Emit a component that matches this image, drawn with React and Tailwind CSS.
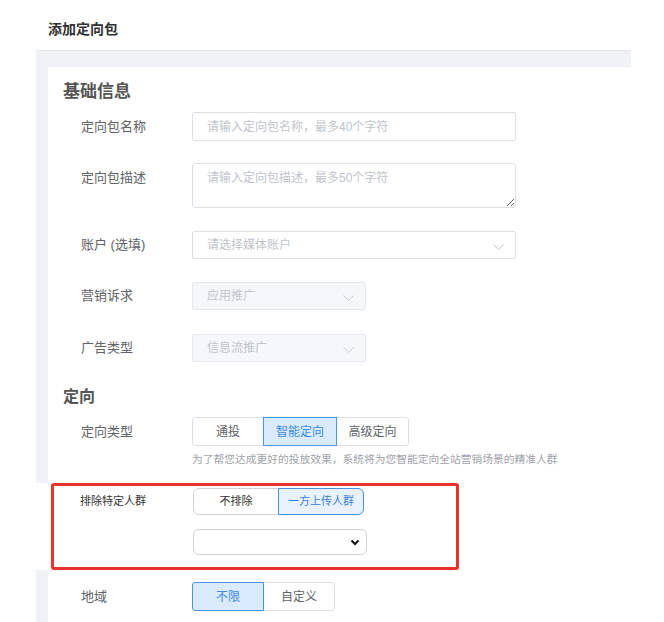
import React from 'react';

const font = { fontFamily: '"Liberation Sans", "Noto Sans CJK SC", sans-serif' };

function Chevron({ className = '' }) {
  return (
    <svg width="11" height="6" viewBox="0 0 11 6" className={className}>
      <path d="M0.5 0.5 L5.5 5.5 L10.5 0.5" fill="none" stroke="currentColor" strokeWidth="1" />
    </svg>
  );
}

function Row({ label, top = 'mt-[23px]', h = 'h-[29px] leading-[29px]', children }) {
  return (
    <div className={`flex items-start ${top} pl-[33px]`}>
      <div className={`w-[111px] shrink-0 ${h} text-[13px] text-[#606266]`}>{label}</div>
      {children}
    </div>
  );
}

function Segment({ items, active, widths }) {
  return (
    <div className="flex h-[29px]">
      {items.map((it, i) => {
        const on = i === active;
        const first = i === 0;
        const last = i === items.length - 1;
        return (
          <div
            key={it}
            className={
              'flex items-center justify-center text-[12px] border ' +
              (first ? 'rounded-l-[3px] ' : '-ml-px ') +
              (last ? 'rounded-r-[3px] ' : '') +
              (on
                ? 'relative z-10 bg-[#d9ebfd] border-[#4a94e6] text-[#3b8ae6]'
                : 'bg-white border-[#dcdfe6] text-[#606266]')
            }
            style={{ width: widths[i] }}
          >
            {it}
          </div>
        );
      })}
    </div>
  );
}

export default function App() {
  return (
    <div className="min-h-[622px] bg-white" style={font}>
      <div className="pt-[20px] pl-[48px] text-[14px] leading-[18px] font-bold text-[#303133]">添加定向包</div>

      <div className="mt-[12px] ml-[36px] w-[595px] bg-[#f0f2f5] border-t border-[#e6e8eb] pt-[16px] pl-[12px]">
        <div className="bg-white pb-[12px]">
          <div className="pt-[14px] pl-[15px] text-[17px] leading-[22px] font-bold text-[#555]">基础信息</div>

          <Row label="定向包名称" top="mt-[9px]">
            <input
              className="w-[324px] h-[29px] border border-[#dcdfe6] rounded-[2px] px-[14px] text-[12px] outline-none placeholder:text-[#c0c4cc]"
              placeholder="请输入定向包名称，最多40个字符"
            />
          </Row>

          <Row label="定向包描述" top="mt-[22px]">
            <textarea
              className="block w-[324px] h-[45px] border border-[#dcdfe6] rounded-[3px] px-[14px] py-[6px] text-[12px] leading-[16px] outline-none placeholder:text-[#c0c4cc]"
              placeholder="请输入定向包描述，最多50个字符"
            />
          </Row>

          <Row label="账户 (选填)" h="h-[28px] leading-[28px]">
            <div className="w-[324px] h-[28px] border border-[#dcdfe6] rounded-[2px] pl-[14px] pr-[11px] flex items-center justify-between text-[12px] text-[#c0c4cc]">
              <span>请选择媒体账户</span>
              <Chevron className="mt-[3px] text-[#c0c4cc]" />
            </div>
          </Row>

          <Row label="营销诉求" h="h-[28px] leading-[28px]">
            <div className="w-[174px] h-[28px] border border-[#e4e7ed] bg-[#f5f7fa] rounded-[2px] pl-[14px] pr-[11px] flex items-center justify-between text-[12px] text-[#c0c4cc]">
              <span>应用推广</span>
              <Chevron className="mt-[3px] text-[#c8cbd2]" />
            </div>
          </Row>

          <Row label="广告类型" top="mt-[24px]" h="h-[28px] leading-[28px]">
            <div className="w-[174px] h-[28px] border border-[#e4e7ed] bg-[#f5f7fa] rounded-[2px] pl-[14px] pr-[11px] flex items-center justify-between text-[12px] text-[#c0c4cc]">
              <span>信息流推广</span>
              <Chevron className="mt-[3px] text-[#c8cbd2]" />
            </div>
          </Row>

          <div className="mt-[24px] pl-[15px] text-[16px] leading-[22px] font-bold text-[#555]">定向</div>

          <Row label="定向类型" top="mt-[9px]">
            <Segment items={['通投', '智能定向', '高级定向']} active={1} widths={[72, 74, 73]} />
          </Row>
          <div className="mt-[5px] pl-[144px] text-[10.75px] leading-[16px] text-[#a0a3a9]">
            为了帮您达成更好的投放效果，系统将为您智能定向全站营销场景的精准人群
          </div>

          <div className="-ml-[12px] mt-[16px] bg-white pl-[15px]">
            <div className="w-[408px] h-[87px] border-[3px] border-[#e8342c] rounded-[3px] pt-[2px] pl-[26px]">
              <div className="flex">
                <div className="w-[113px] h-[27px] leading-[27px] text-[11px] text-[#333]">排除特定人群</div>
                <div className="flex h-[27px] text-[11px]">
                  <div className="w-[86px] flex items-center justify-center border border-[#d0d3d8] rounded-l-[6px] text-[#333] bg-white">不排除</div>
                  <div className="w-[86px] -ml-px flex items-center justify-center border border-[#4a8fe0] rounded-r-[6px] text-[#3a7fd6] bg-[#e8f2fe]">一方上传人群</div>
                </div>
              </div>
              <div className="flex mt-[14px]">
                <div className="w-[113px]" />
                <div className="w-[174px] h-[26px] border border-[#cfd2d6] rounded-[6px] bg-white flex items-center justify-end pr-[6px]">
                  <svg width="10" height="7" viewBox="0 0 10 7">
                    <path d="M1.5 1.5 L5 5 L8.5 1.5" fill="none" stroke="#111" strokeWidth="2" />
                  </svg>
                </div>
              </div>
            </div>
          </div>

          <Row label="地域" top="mt-[12px]">
            <Segment items={['不限', '自定义']} active={0} widths={[72, 72]} />
          </Row>
        </div>
      </div>
    </div>
  );
}
